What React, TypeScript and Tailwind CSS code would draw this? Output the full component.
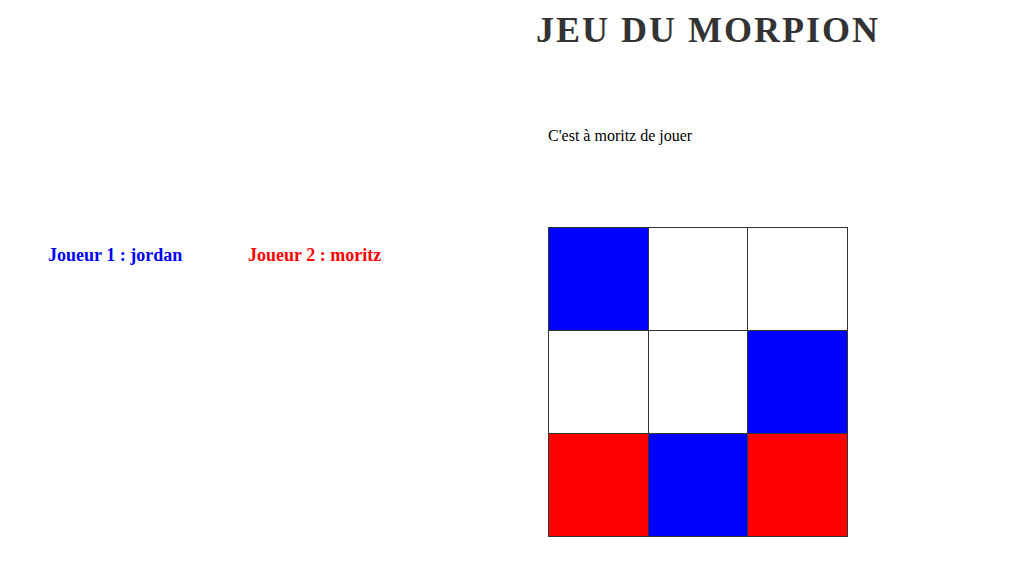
import React from "react";

type Cell = "x" | "o" | null;

const board: Cell[] = ["x", null, null, null, null, "x", "o", "x", "o"];

const cellColor = (c: Cell) =>
  c === "x" ? "bg-[#0000ff]" : c === "o" ? "bg-[#ff0000]" : "bg-white";

export default function App() {
  return (
    <div className="flex w-[1013px] h-[567px] bg-white text-black font-['Liberation_Serif',serif]">
      {/* players */}
      <div className="w-[536px] pt-[242px] pl-12 flex">
        <p className="w-[200px] font-bold text-[18px] leading-normal text-[#0000ff]">Joueur 1 : jordan</p>
        <p className="font-bold text-[18px] leading-normal text-[#ff0000]">Joueur 2 : moritz</p>
      </div>

      {/* game */}
      <div className="flex flex-col pt-[3px]">
        <h1 className="text-[36px] font-bold tracking-[2px] text-[#333333] leading-normal">
          JEU DU MORPION
        </h1>
        <p className="mt-[67px] ml-3 text-base leading-normal">C'est à moritz de jouer</p>
        <div className="mt-[79px] ml-3 grid grid-cols-[99px_98px_99px] grid-rows-[102px_102px_102px] gap-px p-px bg-[#333333] w-fit">
          {board.map((c, i) => (
            <div key={i} className={cellColor(c)} />
          ))}
        </div>
      </div>
    </div>
  );
}
